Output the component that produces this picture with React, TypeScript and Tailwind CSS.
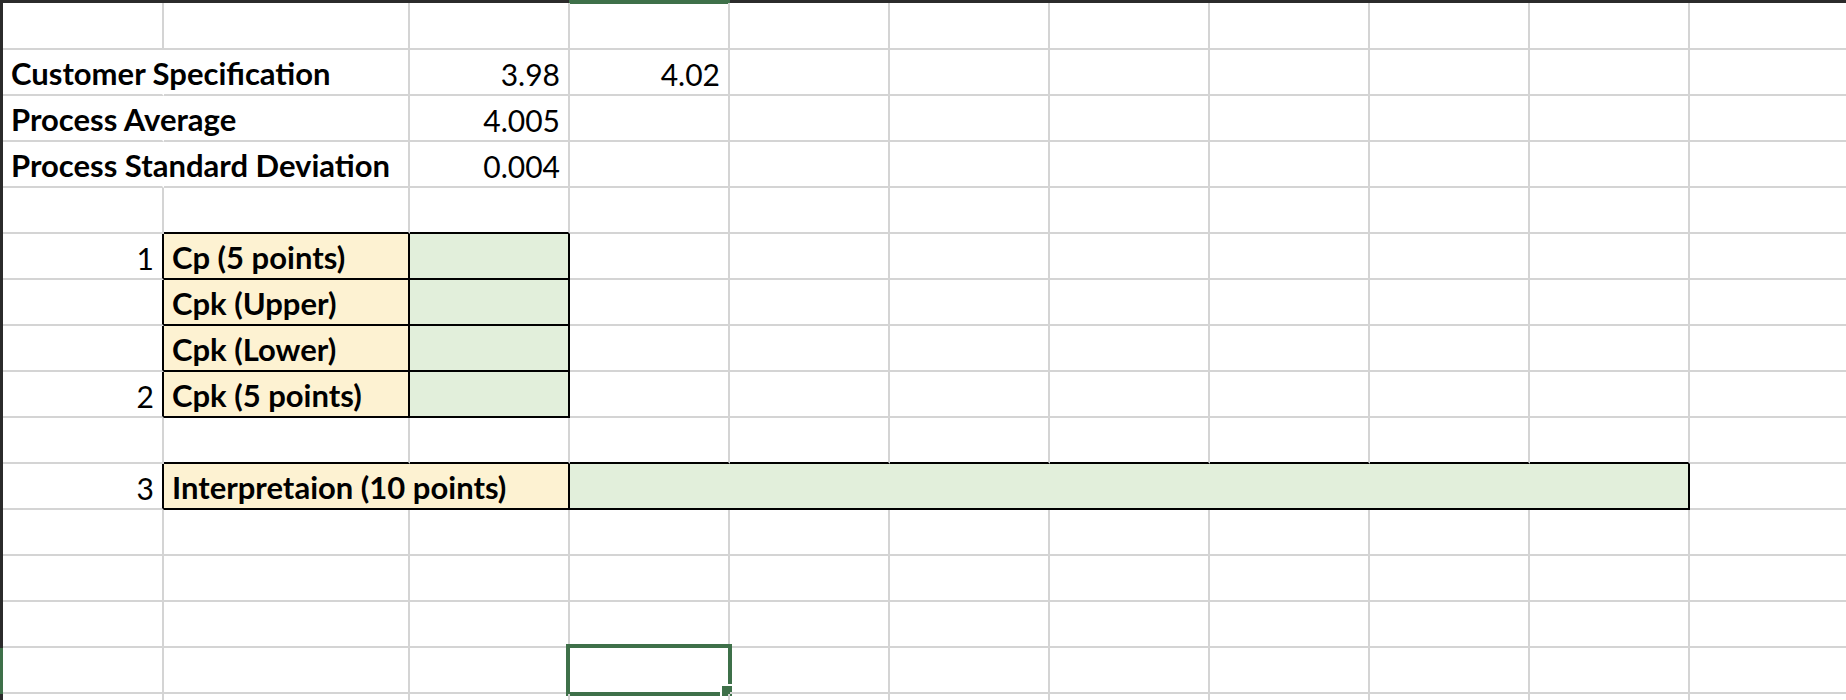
import React from 'react';

type Edge = 'gray' | 'black' | 'none';

type Cell = {
  span?: number;
  text?: string;
  align?: 'left' | 'right';
  bold?: boolean;
  fill?: 'yellow' | 'green';
  r?: Edge;
  b?: Edge;
  selected?: boolean;
};

// column widths incl. the 2px grid line on the right
const widths = [161, 246, 160, 160, 160, 160, 160, 160, 160, 160, 160];

const rightEdge: Record<Edge, string> = {
  gray: 'border-r-[#d4d4d4]',
  black: 'border-r-black',
  none: 'border-r-white',
};
const bottomEdge: Record<Edge, string> = {
  gray: 'border-b-[#d4d4d4]',
  black: 'border-b-black',
  none: 'border-b-white',
};

const blank = (n: number, extra: Cell = {}): Cell[] => Array.from({ length: n }, () => ({ ...extra }));

const label = (text: string): Cell => ({ text, bold: true, r: 'none' });

const rows: Cell[][] = [
  blank(11),
  [label('Customer Specification'), {}, { text: '3.98', align: 'right' }, { text: '4.02', align: 'right' }, ...blank(7)],
  [label('Process Average'), {}, { text: '4.005', align: 'right' }, ...blank(8)],
  [label('Process Standard Deviation'), {}, { text: '0.004', align: 'right' }, ...blank(8)],
  [{}, { b: 'black' }, { b: 'black' }, ...blank(8)],
  [
    { text: '1', align: 'right', r: 'black' },
    { text: 'Cp (5 points)', bold: true, fill: 'yellow', r: 'black', b: 'black' },
    { fill: 'green', r: 'black', b: 'black' },
    ...blank(8),
  ],
  [
    { r: 'black' },
    { text: 'Cpk (Upper)', bold: true, fill: 'yellow', r: 'black', b: 'black' },
    { fill: 'green', r: 'black', b: 'black' },
    ...blank(8),
  ],
  [
    { r: 'black' },
    { text: 'Cpk (Lower)', bold: true, fill: 'yellow', r: 'black', b: 'black' },
    { fill: 'green', r: 'black', b: 'black' },
    ...blank(8),
  ],
  [
    { text: '2', align: 'right', r: 'black' },
    { text: 'Cpk (5 points)', bold: true, fill: 'yellow', r: 'black', b: 'black' },
    { fill: 'green', r: 'black', b: 'black' },
    ...blank(8),
  ],
  [{}, ...blank(9, { b: 'black' }), {}],
  [
    { text: '3', align: 'right', r: 'black' },
    { span: 2, text: 'Interpretaion (10 points)', bold: true, fill: 'yellow', r: 'black', b: 'black' },
    { span: 7, fill: 'green', r: 'black', b: 'black' },
    {},
  ],
  blank(11),
  blank(11),
  blank(11),
  [{}, {}, {}, { selected: true }, ...blank(7)],
  blank(11),
];

function GridCell({ cell, col, height }: { cell: Cell; col: number; height: number }) {
  const span = cell.span ?? 1;
  const width = widths.slice(col, col + span).reduce((a, b) => a + b, 0);
  const bg = cell.fill === 'yellow' ? 'bg-[#fdf2d2]' : cell.fill === 'green' ? 'bg-[#e2efdb]' : '';
  return (
    <div
      style={{ width, height }}
      className={`relative flex shrink-0 items-end border-r-2 border-b-2 px-2 pb-[5px] ${rightEdge[cell.r ?? 'gray']} ${bottomEdge[cell.b ?? 'gray']} ${bg} ${cell.align === 'right' ? 'justify-end' : 'justify-start'}`}
    >
      {cell.text && (
        <span
          className={`whitespace-nowrap leading-none text-black ${cell.bold ? 'text-[31px] font-bold' : 'text-[30px] font-normal'}`}
        >
          {cell.text}
        </span>
      )}
      {cell.selected && (
        <div className="absolute -left-[4px] -top-[4px] h-[52px] w-[166px] border-4 border-[#3e7049]">
          <div className="absolute -bottom-[6px] -right-[6px] h-[14px] w-[14px] border-2 border-white bg-[#3e7049]" />
        </div>
      )}
    </div>
  );
}

export default function App() {
  return (
    <div className="h-[700px] w-[1846px] overflow-hidden bg-white font-['Lato','Liberation_Sans',sans-serif]">
      <div className="flex h-[3px] items-start bg-[#2b2b2b]">
        <div className="w-[569px] shrink-0" />
        <div className="h-[4px] w-[161px] shrink-0 bg-[#3e7049]" />
      </div>
      {rows.map((row, r) => {
        let col = 0;
        const height = r === 0 ? 47 : 46;
        return (
          <div key={r} className="flex">
            <div style={{ height }} className={`w-[3px] shrink-0 ${r === 14 ? 'bg-[#3e7049]' : 'bg-[#2b2b2b]'}`} />
            {row.map((cell, i) => {
              const start = col;
              col += cell.span ?? 1;
              return <GridCell key={i} cell={cell} col={start} height={height} />;
            })}
          </div>
        );
      })}
    </div>
  );
}
